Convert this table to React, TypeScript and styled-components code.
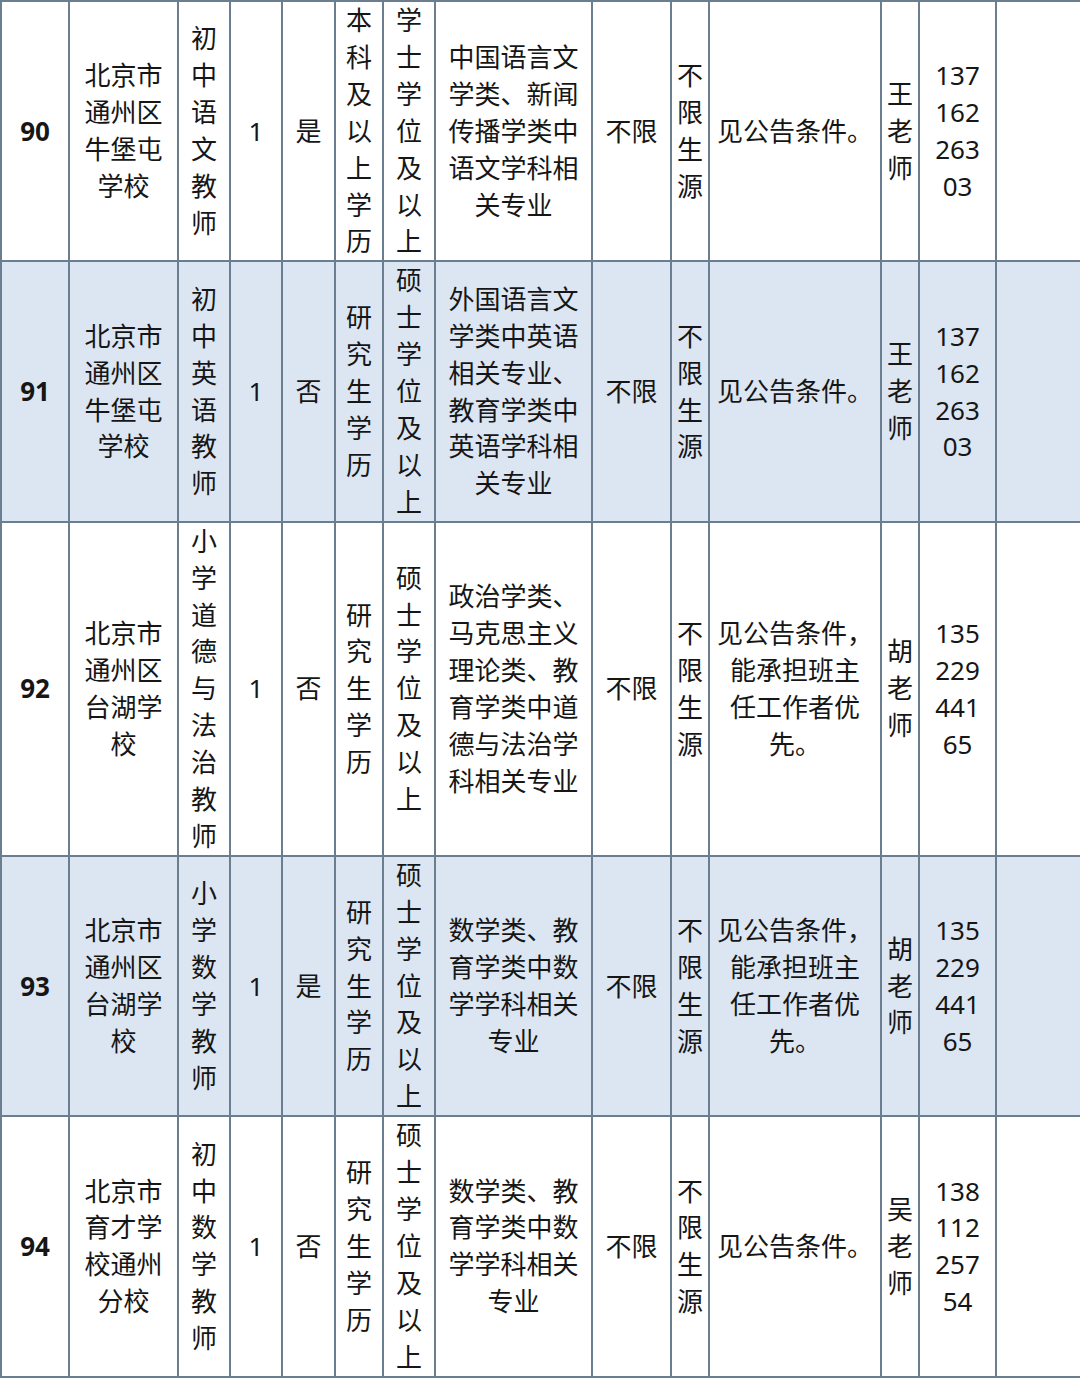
import React from 'react';
import styled, { createGlobalStyle } from 'styled-components';

const GlobalStyle = createGlobalStyle`
  html, body {
    margin: 0;
    padding: 0;
    background: #ffffff;
  }
`;

const Table = styled.table`
  width: 1080px;
  table-layout: fixed;
  border-collapse: collapse;
  font-family: 'Noto Sans', 'Noto Sans CJK SC', sans-serif;
  font-size: 26px;
  line-height: 36.9px;
  color: #161616;
`;

const Row = styled.tr<{ $shaded?: boolean }>`
  background-color: ${({ $shaded }) => ($shaded ? '#dce6f2' : '#ffffff')};
`;

const Cell = styled.td`
  border: 2px solid #6b7e90;
  padding: 0;
  text-align: center;
  vertical-align: middle;
  white-space: pre-line;
  word-break: break-all;
`;

const NumberCell = styled(Cell)`
  font-weight: 700;
`;

const widths = [68, 109, 52, 52, 53, 48, 52, 157, 79, 38, 172, 38, 77, 85];

type Job = {
  no: string;
  school: string;
  post: string;
  count: string;
  staff: string;
  edu: string;
  degree: string;
  major: string;
  age: string;
  source: string;
  other: string;
  contact: string;
  phone: string;
};

const jobs: Job[] = [
  {
    no: '90',
    school: '北京市\n通州区\n牛堡屯\n学校',
    post: '初中语文教师',
    count: '1',
    staff: '是',
    edu: '本科及以上学历',
    degree: '学士学位及以上',
    major: '中国语言文\n学类、新闻\n传播学类中\n语文学科相\n关专业',
    age: '不限',
    source: '不限生源',
    other: '见公告条件。',
    contact: '王老师',
    phone: '137\n162\n263\n03',
  },
  {
    no: '91',
    school: '北京市\n通州区\n牛堡屯\n学校',
    post: '初中英语教师',
    count: '1',
    staff: '否',
    edu: '研究生学历',
    degree: '硕士学位及以上',
    major: '外国语言文\n学类中英语\n相关专业、\n教育学类中\n英语学科相\n关专业',
    age: '不限',
    source: '不限生源',
    other: '见公告条件。',
    contact: '王老师',
    phone: '137\n162\n263\n03',
  },
  {
    no: '92',
    school: '北京市\n通州区\n台湖学\n校',
    post: '小学道德与法治教师',
    count: '1',
    staff: '否',
    edu: '研究生学历',
    degree: '硕士学位及以上',
    major: '政治学类、\n马克思主义\n理论类、教\n育学类中道\n德与法治学\n科相关专业',
    age: '不限',
    source: '不限生源',
    other: '见公告条件，\n能承担班主\n任工作者优\n先。',
    contact: '胡老师',
    phone: '135\n229\n441\n65',
  },
  {
    no: '93',
    school: '北京市\n通州区\n台湖学\n校',
    post: '小学数学教师',
    count: '1',
    staff: '是',
    edu: '研究生学历',
    degree: '硕士学位及以上',
    major: '数学类、教\n育学类中数\n学学科相关\n专业',
    age: '不限',
    source: '不限生源',
    other: '见公告条件，\n能承担班主\n任工作者优\n先。',
    contact: '胡老师',
    phone: '135\n229\n441\n65',
  },
  {
    no: '94',
    school: '北京市\n育才学\n校通州\n分校',
    post: '初中数学教师',
    count: '1',
    staff: '否',
    edu: '研究生学历',
    degree: '硕士学位及以上',
    major: '数学类、教\n育学类中数\n学学科相关\n专业',
    age: '不限',
    source: '不限生源',
    other: '见公告条件。',
    contact: '吴老师',
    phone: '138\n112\n257\n54',
  },
];

const App: React.FC = () => {
  return (
    <>
      <GlobalStyle />
      <Table>
        <colgroup>
          {widths.map((w, i) => (
            <col key={i} style={{ width: w }} />
          ))}
        </colgroup>
        <tbody>
          {jobs.map((job, i) => (
            <Row key={job.no} $shaded={i % 2 === 1}>
              <NumberCell>{job.no}</NumberCell>
              <Cell>{job.school}</Cell>
              <Cell>{job.post}</Cell>
              <Cell>{job.count}</Cell>
              <Cell>{job.staff}</Cell>
              <Cell>{job.edu}</Cell>
              <Cell>{job.degree}</Cell>
              <Cell>{job.major}</Cell>
              <Cell>{job.age}</Cell>
              <Cell>{job.source}</Cell>
              <Cell>{job.other}</Cell>
              <Cell>{job.contact}</Cell>
              <Cell>{job.phone}</Cell>
              <Cell />
            </Row>
          ))}
        </tbody>
      </Table>
    </>
  );
};

export default App;
